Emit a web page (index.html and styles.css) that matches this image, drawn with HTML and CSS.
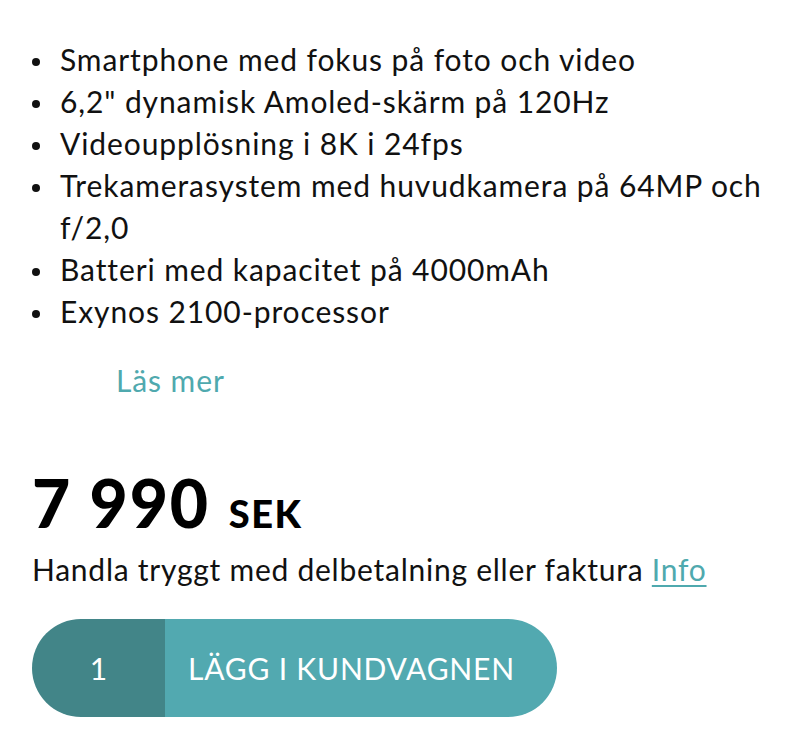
FILE: index.html
```html
<!DOCTYPE html>
<html lang="sv">
<head>
<meta charset="utf-8">
<title>Produkt</title>
<link rel="stylesheet" href="styles.css">
</head>
<body>
<div class="product">
  <ul class="features">
    <li>Smartphone med fokus på foto och video</li>
    <li>6,2" dynamisk Amoled-skärm på 120Hz</li>
    <li>Videoupplösning i 8K i 24fps</li>
    <li>Trekamerasystem med huvudkamera på 64MP och f/2,0</li>
    <li>Batteri med kapacitet på 4000mAh</li>
    <li>Exynos 2100-processor</li>
  </ul>
  <a class="read-more" href="#">Läs mer</a>
  <div class="price"><span class="amount">7 990</span><span class="currency">SEK</span></div>
  <p class="payment">Handla tryggt med delbetalning eller faktura <a href="#" class="info">Info</a></p>
  <div class="buy">
    <span class="qty">1</span>
    <button class="add">LÄGG I KUNDVAGNEN</button>
  </div>
</div>
</body>
</html>
```

FILE: styles.css
```css
html, body {
  margin: 0;
  padding: 0;
  background: #ffffff;
}
body {
  font-family: Lato, "Liberation Sans", sans-serif;
  color: #111111;
}
.product {
  padding: 38px 0 0 32px;
  width: 750px;
}
.features {
  margin: 0;
  padding-left: 28px;
  list-style: none;
  font-size: 30px;
  line-height: 42px;
  letter-spacing: 0.9px;
}
.features li::before {
  content: "";
  display: inline-block;
  width: 8px;
  height: 8px;
  border-radius: 50%;
  background: #111111;
  margin-left: -28px;
  margin-right: 20px;
  vertical-align: 5px;
}
.read-more {
  display: block;
  margin: 27px 0 0 84px;
  font-size: 30px;
  line-height: 42px;
  letter-spacing: 0.9px;
  color: #4fa9ae;
  text-decoration: none;
  width: max-content;
}
.price {
  margin-top: 80px;
  line-height: 44px;
  font-weight: 900;
  color: #000;
}
.amount {
  font-size: 66px;
  letter-spacing: 1.8px;
}
.currency {
  font-size: 38px;
  letter-spacing: 1.5px;
  margin-left: 19px;
}
.payment {
  margin: 4px 0 0 0;
  font-size: 30px;
  line-height: 42px;
  letter-spacing: 0.75px;
}
.info {
  color: #4fa9ae;
  text-decoration: underline;
  text-underline-offset: 4px;
  text-decoration-thickness: 2px;
}
.buy {
  margin-top: 29px;
  display: flex;
  width: 525px;
  height: 98px;
  border-radius: 49px;
  overflow: hidden;
}
.qty {
  width: 133px;
  background: #428588;
  color: #fff;
  font-size: 30px;
  display: flex;
  align-items: center;
  justify-content: center;
}
.add {
  flex: 1;
  border: 0;
  background: #52a9b0;
  color: #fff;
  font-family: inherit;
  font-size: 30px;
  letter-spacing: 0.8px;
  text-align: left;
  padding: 0 0 0 23px;
  cursor: pointer;
}
```
